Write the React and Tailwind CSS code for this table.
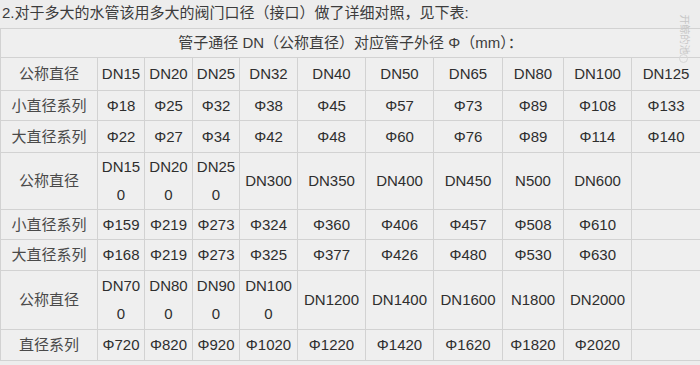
import React from "react";

const widths = [97, 47, 48, 47, 58, 68, 68, 69, 61, 68, 69];

const rows = [
  { h: "h-[33px]", cells: ["公称直径", "DN15", "DN20", "DN25", "DN32", "DN40", "DN50", "DN65", "DN80", "DN100", "DN125"] },
  { h: "h-[30px]", cells: ["小直径系列", "Φ18", "Φ25", "Φ32", "Φ38", "Φ45", "Φ57", "Φ73", "Φ89", "Φ108", "Φ133"] },
  { h: "h-[32px]", cells: ["大直径系列", "Φ22", "Φ27", "Φ34", "Φ42", "Φ48", "Φ60", "Φ76", "Φ89", "Φ114", "Φ140"] },
  { h: "h-[57px]", cells: ["公称直径", "DN150", "DN200", "DN250", "DN300", "DN350", "DN400", "DN450", "N500", "DN600", ""] },
  { h: "h-[30px]", cells: ["小直径系列", "Φ159", "Φ219", "Φ273", "Φ324", "Φ360", "Φ406", "Φ457", "Φ508", "Φ610", ""] },
  { h: "h-[31px]", cells: ["大直径系列", "Φ168", "Φ219", "Φ273", "Φ325", "Φ377", "Φ426", "Φ480", "Φ530", "Φ630", ""] },
  { h: "h-[59px]", cells: ["公称直径", "DN700", "DN800", "DN900", "DN1000", "DN1200", "DN1400", "DN1600", "N1800", "DN2000", ""] },
  { h: "h-[31px]", cells: ["直径系列", "Φ720", "Φ820", "Φ920", "Φ1020", "Φ1220", "Φ1420", "Φ1620", "Φ1820", "Φ2020", ""] },
];

export default function App() {
  return (
    <div
      className="relative w-[700px] h-[365px] overflow-hidden bg-[#ededed] text-[#2e2e2e] text-[15px]"
      style={{ fontFamily: '"Liberation Sans", "Noto Sans CJK SC", sans-serif' }}
    >
      <div className="h-[28px] pl-[2px] leading-[26px] whitespace-nowrap text-[#3c3c3c]">
        2.对于多大的水管该用多大的阀门口径（接口）做了详细对照，见下表:
      </div>
      <table className="table-fixed border-collapse w-[700px]">
        <colgroup>
          {widths.map((w, i) => (
            <col key={i} style={{ width: w }} />
          ))}
        </colgroup>
        <tbody>
          <tr className="h-[29px]">
            <td
              colSpan={11}
              className="border border-[#d2d2d2] bg-[#efefef] text-center align-middle leading-[20px] p-0 text-[#3c3c3c]"
            >
              管子通径 DN（公称直径）对应管子外径 Φ（mm）：
            </td>
          </tr>
          {rows.map((r, ri) => (
            <tr key={ri} className={r.h}>
              {r.cells.map((c, ci) => (
                <td
                  key={ci}
                  className={`border border-[#d2d2d2] bg-[#efefef] text-center align-middle leading-[28px] px-[2px] py-0 break-all ${
                    ci === 0 ? "text-[#4a4a4a]" : ""
                  }`}
                >
                  {c}
                </td>
              ))}
            </tr>
          ))}
        </tbody>
      </table>
      <div className="absolute left-[676px] top-[12px] w-[16px] h-[44px] flex items-center justify-center pointer-events-none">
        <span className="rotate-90 whitespace-nowrap text-[10px] text-[#c6c6c6]">开鲸的池</span>
      </div>
      <div className="absolute left-[679px] top-[54px] w-[9px] h-[9px] rounded-full border border-[#d6d6d6] pointer-events-none" />
    </div>
  );
}
